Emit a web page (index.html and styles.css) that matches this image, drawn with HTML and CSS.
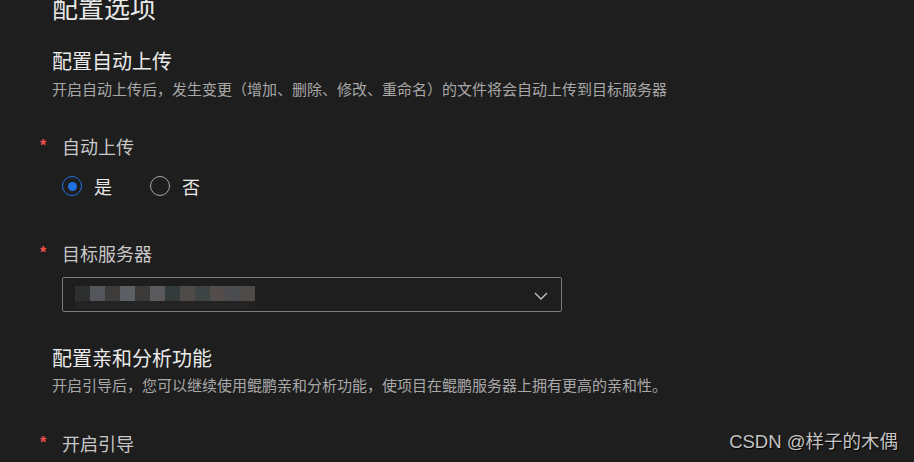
FILE: index.html
```html
<!DOCTYPE html>
<html lang="zh-CN">
<head>
<meta charset="utf-8">
<title>配置选项</title>
<link rel="stylesheet" href="styles.css">
</head>
<body>
<main class="page">
  <h1 class="title">配置选项</h1>

  <section class="section">
    <h2 class="section-title">配置自动上传</h2>
    <p class="section-desc">开启自动上传后，发生变更（增加、删除、修改、重命名）的文件将会自动上传到目标服务器</p>
  </section>

  <div class="field field-auto">
    <div class="field-label"><span class="req">*</span><span>自动上传</span></div>
    <div class="radio-group">
      <label class="radio checked"><span class="radio-dot"></span><span class="radio-text">是</span></label>
      <label class="radio"><span class="radio-dot"></span><span class="radio-text">否</span></label>
    </div>
  </div>

  <div class="field field-server">
    <div class="field-label"><span class="req">*</span><span>目标服务器</span></div>
    <div class="select">
      <div class="mosaic">
        <span class="px" style="background:#2e302f"></span>
        <span class="px" style="background:#54565b"></span>
        <span class="px" style="background:#3e3c3a"></span>
        <span class="px" style="background:#5c6064"></span>
        <span class="px" style="background:#3b3a38"></span>
        <span class="px" style="background:#5a5a5c"></span>
        <span class="px" style="background:#333a3a"></span>
        <span class="px" style="background:#4e4a48"></span>
        <span class="px" style="background:#3e4444"></span>
        <span class="px" style="background:#524c4a"></span>
        <span class="px" style="background:#4a4c50"></span>
        <span class="px" style="background:#4e4a48"></span>
      </div>
      <svg class="chevron" width="14" height="8" viewBox="0 0 14 8"><polyline points="1,1 7,7 13,1" fill="none" stroke="#c5c5c5" stroke-width="1.3"/></svg>
    </div>
  </div>

  <section class="section section-2">
    <h2 class="section-title">配置亲和分析功能</h2>
    <p class="section-desc">开启引导后，您可以继续使用鲲鹏亲和分析功能，使项目在鲲鹏服务器上拥有更高的亲和性。</p>
  </section>

  <div class="field field-guide">
    <div class="field-label"><span class="req">*</span><span>开启引导</span></div>
  </div>
</main>
<div class="watermark">CSDN @样子的木偶</div>
</body>
</html>
```

FILE: styles.css
```css
html, body {
  margin: 0;
  padding: 0;
  background: #1e1e1e;
  height: 100%;
  overflow: hidden;
}
body {
  font-family: "Noto Sans CJK SC", "Microsoft YaHei", sans-serif;
  color: #e0e0e0;
  position: relative;
}
.page {
  padding-left: 40px;
}
.title {
  margin: -8px 0 0 12px;
  font-size: 26px;
  line-height: 30px;
  font-weight: 400;
  color: #e8e8e8;
}
.section {
  margin: 27px 0 0 12px;
}
.section-2 {
  margin-top: 34px;
}
.section-title {
  margin: 0;
  font-size: 20px;
  line-height: 24px;
  font-weight: 400;
  color: #eaeaea;
}
.section-desc {
  margin: 6px 0 0 0;
  font-size: 15px;
  line-height: 20px;
  color: #a8a8a8;
  white-space: nowrap;
}
.section-2 .section-desc {
  margin-top: 5px;
}
.field-label {
  display: flex;
  align-items: center;
  font-size: 18px;
  line-height: 24px;
  color: #c8c8c8;
}
.req {
  width: 22px;
  color: #f14c4c;
  font-family: "Liberation Sans", sans-serif;
  font-weight: 700;
  font-size: 16px;
  line-height: 24px;
}
.field-auto { margin-top: 35px; }
.field-server { margin-top: 45px; }
.field-guide { margin-top: 36px; }

.radio-group {
  display: flex;
  gap: 38px;
  margin: 18px 0 0 22px;
}
.radio {
  display: flex;
  align-items: center;
  gap: 12px;
  height: 20px;
}
.radio-dot {
  box-sizing: border-box;
  width: 20px;
  height: 20px;
  border-radius: 50%;
  border: 1.5px solid #a8a8a8;
  display: flex;
  align-items: center;
  justify-content: center;
}
.radio.checked .radio-dot {
  border-color: #1f70e0;
}
.radio.checked .radio-dot::after {
  content: "";
  width: 9px;
  height: 9px;
  border-radius: 50%;
  background: #1f70e0;
}
.radio-text {
  font-size: 18px;
  line-height: 20px;
  color: #e8e8e8;
}

.select {
  box-sizing: border-box;
  margin: 12px 0 0 22px;
  width: 500px;
  height: 35px;
  border: 1px solid #7c7c7c;
  border-radius: 2px;
  display: flex;
  align-items: center;
  justify-content: space-between;
  padding: 0 13px 0 12px;
}
.mosaic {
  display: flex;
  height: 15px;
  margin-top: -3px;
  box-shadow: 0 8px 0 #232323;
}
.px {
  width: 15px;
  height: 15px;
}
.chevron {
  display: block;
  margin-top: 2px;
}

.watermark {
  position: absolute;
  right: 16px;
  bottom: 9px;
  font-family: "Liberation Sans", "Noto Sans CJK SC", sans-serif;
  font-size: 18.5px;
  line-height: 22px;
  color: #c4c4c4;
  text-shadow: 1px 1px 1px #000;
}
```
